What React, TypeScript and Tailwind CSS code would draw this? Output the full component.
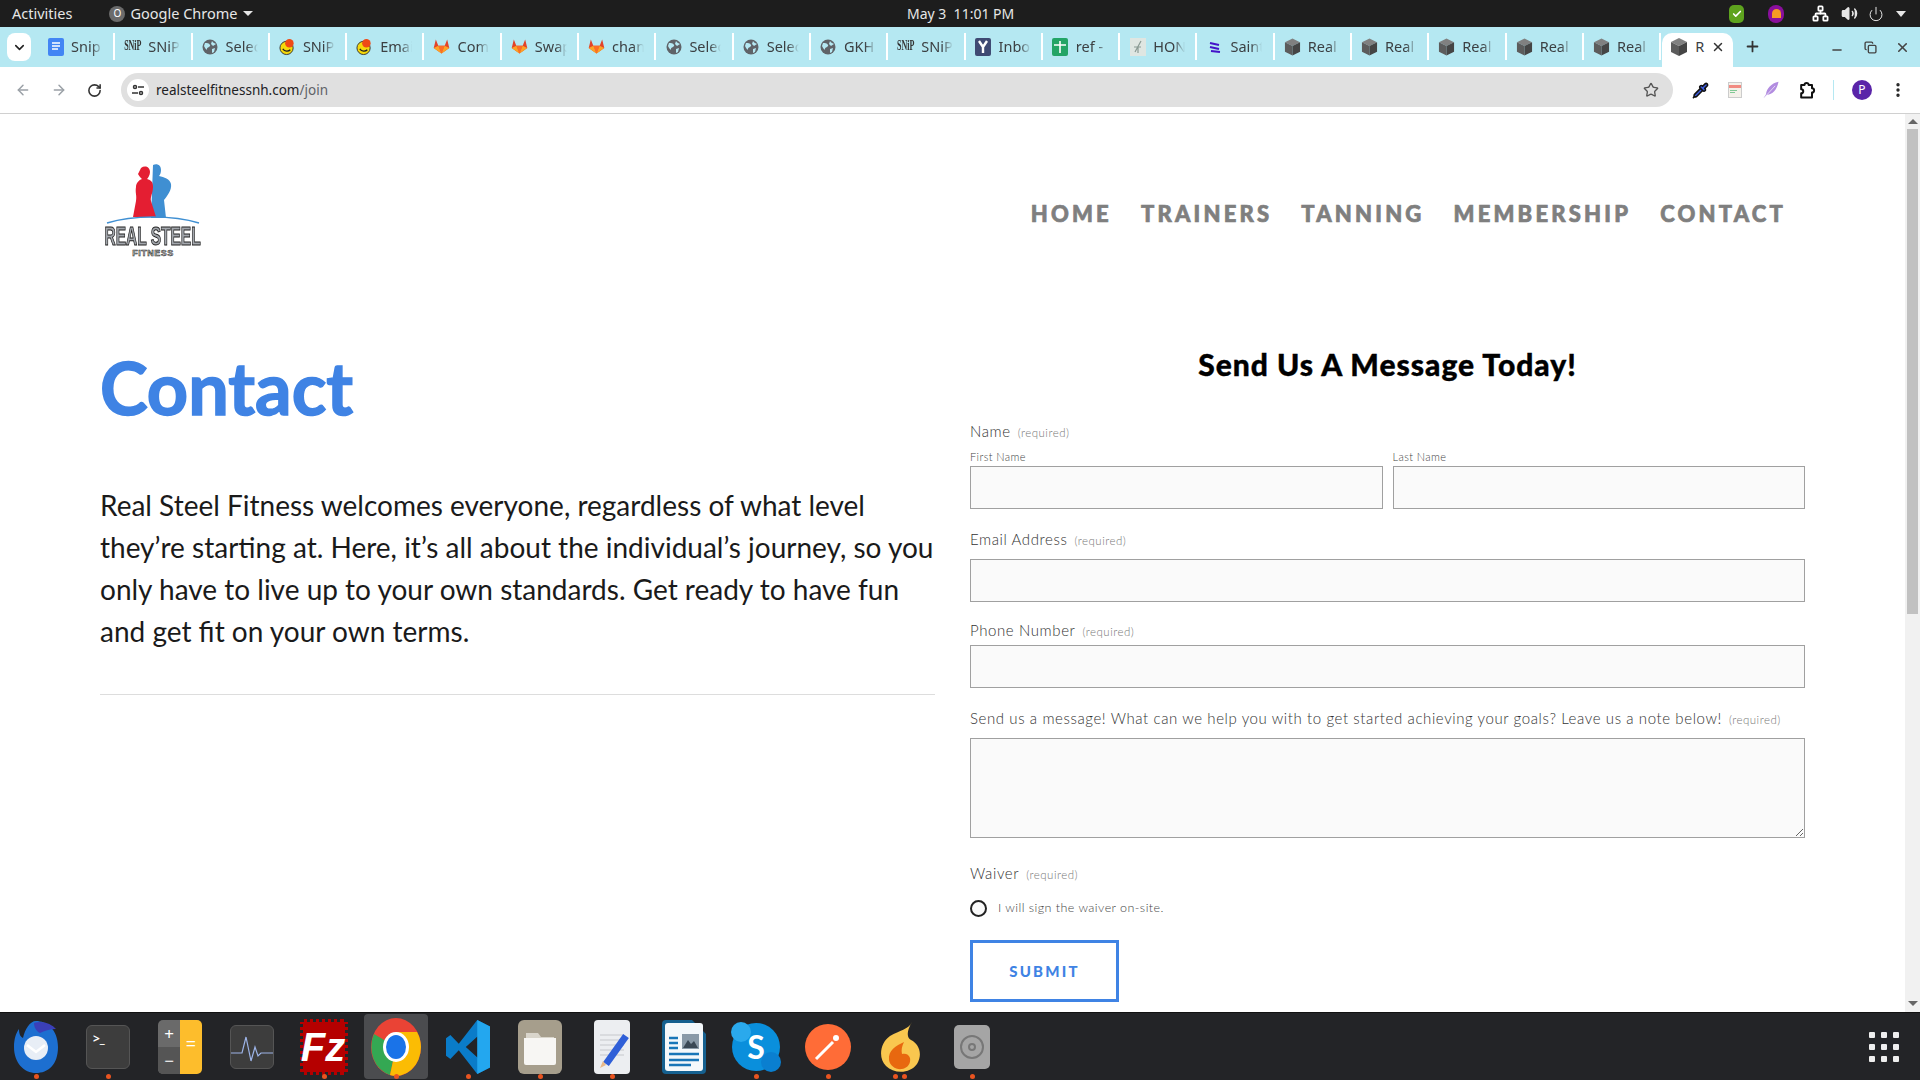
import { ChevronDown, ArrowLeft, ArrowRight, RotateCw, Star, Plus, X, Minus, Copy, EllipsisVertical, Pipette, Volume2, Power, Network, Check } from 'lucide-react';

const uiFont = "[font-family:'Noto_Sans',Roboto,sans-serif]";

type Fav = 'doc' | 'snip' | 'globe' | 'ball' | 'lab' | 'mail' | 'sheet' | 'hon' | 'sain' | 'cube';

const tabs: { icon: Fav; label: string }[] = [
    { icon: 'doc', label: 'Snip' },
    { icon: 'snip', label: 'SNiP' },
    { icon: 'globe', label: 'Selec' },
    { icon: 'ball', label: 'SNiP' },
    { icon: 'ball', label: 'Emai' },
    { icon: 'lab', label: 'Com' },
    { icon: 'lab', label: 'Swap' },
    { icon: 'lab', label: 'chan' },
    { icon: 'globe', label: 'Selec' },
    { icon: 'globe', label: 'Selec' },
    { icon: 'globe', label: 'GKH' },
    { icon: 'snip', label: 'SNiP' },
    { icon: 'mail', label: 'Inbo' },
    { icon: 'sheet', label: 'ref -' },
    { icon: 'hon', label: 'HON' },
    { icon: 'sain', label: 'Saint' },
    { icon: 'cube', label: 'Real' },
    { icon: 'cube', label: 'Real' },
    { icon: 'cube', label: 'Real' },
    { icon: 'cube', label: 'Real' },
    { icon: 'cube', label: 'Real' },
];

const navItems = ['HOME', 'TRAINERS', 'TANNING', 'MEMBERSHIP', 'CONTACT'];

const Cube = () => (
    <svg width="18" height="18" viewBox="0 0 18 18">
        <path d="M9 0 17 4 9 8 1 4z" fill="#808080" />
        <path d="M1 4 9 8v10L1 14z" fill="#5c5c5c" />
        <path d="M17 4 9 8v10l8-4z" fill="#454545" />
    </svg>
);

const Favicon = ({ kind }: { kind: Fav }) => {
    if (kind === 'doc')
        return (
            <svg width="16" height="18" viewBox="0 0 16 18">
                <rect width="16" height="18" rx="2" fill="#4285f4" />
                <path d="M4 5h8M4 8h8M4 11h6" stroke="#fff" strokeWidth="1.6" />
            </svg>
        );
    if (kind === 'snip')
        return (
            <span className="flex h-[18px] w-[16px] scale-y-[1.7] items-center justify-center text-[8px] leading-none font-bold text-[#333] [font-family:'Liberation_Serif',serif]">
                SNiP
            </span>
        );
    if (kind === 'globe')
        return (
            <svg width="16" height="16" viewBox="0 0 16 16">
                <circle cx="8" cy="8" r="7.5" fill="#5f6368" />
                <path d="M3 4c2 0 4 0 5 2S5 8 5 10 3 9 2 7zM10 2c1 2 3 2 4 3l-3 2-2-2zM10 10l3-1-1 4-2 1z" fill="#b5e8f2" />
            </svg>
        );
    if (kind === 'ball')
        return (
            <svg width="18" height="18" viewBox="0 0 18 18">
                <circle cx="8" cy="10" r="7" fill="#f5d90a" stroke="#333" strokeWidth="1" />
                <path d="M4 11c2 3 6 3 8 1" stroke="#222" strokeWidth="1.4" fill="none" />
                <circle cx="11" cy="5" r="4.5" fill="#ef4a16" />
            </svg>
        );
    if (kind === 'lab')
        return (
            <svg width="17" height="17" viewBox="0 0 24 24">
                <path d="M12 22 1 14 4 2l3.5 9h9L20 2l3 12z" fill="#e24329" />
                <path d="M12 22 7.500 11h9z" fill="#fc6d26" />
                <path d="M12 22 1 14l6.500-3zM12 22l11-8-6.500-3z" fill="#fca326" />
            </svg>
        );
    if (kind === 'mail')
        return (
            <svg width="16" height="18" viewBox="0 0 16 18">
                <rect width="16" height="18" rx="2" fill="#3f4a73" />
                <path d="M4 3l4 6 4-6M8 9v6" stroke="#fff" strokeWidth="2.4" fill="none" />
            </svg>
        );
    if (kind === 'sheet')
        return (
            <svg width="16" height="18" viewBox="0 0 16 18">
                <rect width="16" height="18" rx="2" fill="#23a566" />
                <path d="M2 7h12M8 3v12" stroke="#fff" strokeWidth="1.6" />
            </svg>
        );
    if (kind === 'hon')
        return (
            <svg width="16" height="18" viewBox="0 0 16 18">
                <rect width="16" height="18" fill="#dfe6e2" />
                <path d="M5 14 11 3M4 9h7M8 8v7" stroke="#8a9a94" strokeWidth="1.2" fill="none" />
            </svg>
        );
    if (kind === 'sain')
        return (
            <svg width="14" height="14" viewBox="0 0 14 14">
                <path d="M2 3l9 2M2 7l9 2M3 11l9 1" stroke="#4413c9" strokeWidth="2.2" />
            </svg>
        );
    return <Cube />;
};

const Tab = ({ icon, label }: { icon: Fav; label: string }) => (
    <div className="flex h-[27px] w-[77.3px] shrink-0 items-center gap-[7px] overflow-hidden border-r-2 border-white pl-[9px]">
        <span className="flex w-[17px] shrink-0 justify-center">
            <Favicon kind={icon} />
        </span>
        <span className={`w-[32px] overflow-hidden text-[14.5px] whitespace-nowrap text-[#3c4043] [mask-image:linear-gradient(to_right,#000_65%,transparent)] ${uiFont}`}>
            {label}
        </span>
    </div>
);

const TopBar = () => (
    <div className={`relative flex h-[27px] shrink-0 items-center justify-between bg-[#1d1d1d] pr-[14px] pl-[12px] text-[14.5px] text-[#e6e6e6] ${uiFont}`}>
        <div className="flex items-center">
            <span>Activities</span>
            <span className="ml-[37px] flex h-[16px] w-[16px] items-center justify-center rounded-full bg-[#6b6b6b] text-[10px] text-white">O</span>
            <span className="ml-[5px]">Google Chrome</span>
            <span className="ml-[6px] h-0 w-0 border-x-[5px] border-t-[5px] border-x-transparent border-t-[#e6e6e6]" />
        </div>
        <span className="absolute left-[907px] text-[14px]">May 3&nbsp; 11:01 PM</span>
        <div className="flex items-center">
            <span className="flex h-[18px] w-[15px] items-center justify-center rounded-[5px] bg-[#5ea31e]">
                <Check size={10} color="#fff" strokeWidth={4} />
            </span>
            <span className="ml-[24px] flex h-[18px] w-[16px] items-center justify-center rounded-full bg-[#8a0f9c]">
                <span className="h-[9px] w-[9px] rounded-t-full bg-[#f59b23]" />
            </span>
            <Network size={17} className="ml-[28px]" color="#fff" strokeWidth={2.5} />
            <Volume2 size={17} className="ml-[12px]" color="#e6e6e6" fill="#e6e6e6" />
            <Power size={16} className="ml-[10px]" color="#e6e6e6" strokeWidth={1.5} />
            <span className="ml-[12px] h-0 w-0 border-x-[5px] border-t-[6px] border-x-transparent border-t-[#e6e6e6]" />
        </div>
    </div>
);

const TabStrip = () => (
    <div className="flex h-[40px] shrink-0 items-end bg-[#b5e8f2]">
        <div className="mb-[6px] ml-[7px] flex h-[28px] w-[24px] items-center justify-center rounded-[8px] bg-white">
            <ChevronDown size={15} color="#222" strokeWidth={2.5} />
        </div>
        <div className="mb-[7px] ml-[7px] flex">
            {tabs.map((t, i) => (
                <Tab key={i} icon={t.icon} label={t.label} />
            ))}
        </div>
        <div className="ml-[1px] flex h-[34px] w-[71px] shrink-0 items-center rounded-t-[10px] bg-white pb-[6px] pl-[8px]">
            <Cube />
            <span className={`ml-[7px] w-[10px] overflow-hidden text-[14.5px] text-[#3c4043] ${uiFont}`}>R</span>
            <X size={14} className="ml-[6px]" color="#333" strokeWidth={2.5} />
        </div>
        <Plus size={17} className="mb-[12px] ml-[11px]" color="#333" strokeWidth={2.5} />
        <Minus size={14} className="mb-[10px] ml-[69px]" color="#444" strokeWidth={2.5} />
        <Copy size={13} className="mb-[13px] ml-[20px]" color="#444" strokeWidth={2.5} />
        <X size={15} className="mb-[12px] ml-[18px]" color="#444" strokeWidth={2.5} />
    </div>
);

const Toolbar = () => (
    <div className="flex h-[47px] shrink-0 items-center border-b border-[#d0d0d0] bg-white pl-[15px]">
        <ArrowLeft size={16} color="#9aa0a6" strokeWidth={2.2} />
        <ArrowRight size={16} className="ml-[20px]" color="#9aa0a6" strokeWidth={2.2} />
        <RotateCw size={15} className="ml-[20px]" color="#333" strokeWidth={2.5} />
        <div className="ml-[19px] flex h-[34px] w-[1552px] items-center rounded-full bg-[#e0e0e0] pl-[6px]">
            <span className="flex h-[22px] w-[22px] items-center justify-center rounded-full bg-white">
                <svg width="14" height="14" viewBox="0 0 14 14" fill="none" stroke="#333" strokeWidth="1.5">
                    <circle cx="4" cy="4" r="1.5" />
                    <circle cx="10" cy="10" r="1.5" />
                    <path d="M7 4h6M1 10h6" />
                </svg>
            </span>
            <span className={`ml-[7px] text-[13.5px] text-[#202124] ${uiFont}`}>
                realsteelfitnessnh.com<span className="text-[#5f6368]">/join</span>
            </span>
            <Star size={16} className="mr-[14px] ml-auto" color="#555" strokeWidth={2} />
        </div>
        <Pipette size={17} className="ml-[19px]" color="#111" fill="#3b5bdb" strokeWidth={2.2} />
        <span className="ml-[19px] h-[16px] w-[14px] border border-[#ccc] bg-[#f4f1ea] pt-[2px]">
            <span className="block h-[3px] bg-[#f28b82]" />
            <span className="mt-[2px] ml-[1px] block h-[1px] w-[7px] bg-[#81c995]" />
            <span className="mt-[1px] ml-[1px] block h-[1px] w-[5px] bg-[#81c995]" />
        </span>
        <svg width="20" height="20" viewBox="0 0 24 24" className="ml-[19px]">
            <path d="M21 2C12 4 7 10 6 17l-3 5 4-4c7-1 12-6 14-16z" fill="#b28ce0" />
            <path d="M17 7 5 20" stroke="#fff" strokeWidth="0.8" />
        </svg>
        <svg width="20" height="20" viewBox="0 0 22 24" className="ml-[16px]" fill="none" stroke="#111" strokeWidth="2.4" strokeLinejoin="round">
            <path d="M4 6h4a2.5 2.5 0 0 1 5 0h4v4a2.5 2.5 0 0 1 0 5v6H4v-5a2.5 2.5 0 0 0 0-5z" />
        </svg>
        <span className="ml-[16px] h-[20px] w-px bg-[#b5e8f2]" />
        <span className={`ml-[18px] flex h-[20px] w-[20px] items-center justify-center rounded-full bg-[#5a24a8] text-[12px] text-white ${uiFont}`}>P</span>
        <EllipsisVertical size={18} className="ml-[17px]" color="#222" strokeWidth={2.5} />
    </div>
);

const Logo = () => (
    <div className="flex h-[96px] w-[100px] flex-col items-center">
        <svg width="100" height="62" viewBox="0 0 100 62" className="shrink-0">
            <path d="M50 2c4-2 8 0 8 5 0 3-1 5-2 6 5 1 11 3 12 8 1 6-4 12-7 16l2 18H48z" fill="#3f8fd2" />
            <path d="M38 5c4-3 9-1 9 4 0 3-2 6-3 7 4 1 6 3 6 8 0 6-3 10-2 14l5 16H30l3-16c1-6-1-8 0-14 0-4 3-7 6-8-2-2-3-3-4-5z" fill="#e41e32" />
            <path d="M4 60C30 52 70 52 96 60" stroke="#3f8fd2" strokeWidth="1.5" fill="none" />
        </svg>
        <span className="-mt-[1px] scale-x-[0.62] text-[25px] leading-[24px] font-bold whitespace-nowrap text-[#a3a7ad] [font-family:'Liberation_Sans',sans-serif] [-webkit-text-stroke:1px_#1c1c1c]">
            REAL STEEL
        </span>
        <span className="text-[9px] leading-[10px] font-bold tracking-[0.5px] text-[#ccc] [font-family:'Liberation_Sans',sans-serif] [-webkit-text-stroke:0.5px_#1c1c1c]">
            FITNESS
        </span>
    </div>
);

const Required = () => <span className="ml-[7px] text-[11.5px] font-light tracking-[0.5px] text-[#777]">(required)</span>;

const FieldLabel = ({ children }: { children: React.ReactNode }) => (
    <div className="text-[15px] leading-[20px] font-light tracking-[0.6px] text-[#333]">
        {children}
        <Required />
    </div>
);

const inputClass = 'block h-[43px] w-full border border-[#a0a0a0] bg-[#fafafa]';

const Form = () => (
    <div className="w-[835px] shrink-0 text-[#444]">
        <h2 className="-mt-[2px] text-center text-[30px] leading-[40px] font-black tracking-[1px] text-black [-webkit-text-stroke:0.4px_#000]">Send Us A Message Today!</h2>
        <div className="mt-[37px]">
            <FieldLabel>Name</FieldLabel>
        </div>
        <div className="mt-[7px] grid grid-cols-2 gap-[10px]">
            <div>
                <div className="mb-[2px] text-[11px] leading-[14px] font-light tracking-[0.4px] text-[#444]">First Name</div>
                <input className={inputClass} aria-label="First Name" />
            </div>
            <div>
                <div className="mb-[2px] text-[11px] leading-[14px] font-light tracking-[0.4px] text-[#444]">Last Name</div>
                <input className={inputClass} aria-label="Last Name" />
            </div>
        </div>
        <div className="mt-[20px]">
            <FieldLabel>Email Address</FieldLabel>
        </div>
        <input className={`${inputClass} mt-[8px]`} aria-label="Email Address" />
        <div className="mt-[18px]">
            <FieldLabel>Phone Number</FieldLabel>
        </div>
        <input className={`${inputClass} mt-[3px]`} aria-label="Phone Number" />
        <div className="mt-[20px]">
            <FieldLabel>Send us a message! What can we help you with to get started achieving your goals? Leave us a note below!</FieldLabel>
        </div>
        <textarea className="mt-[8px] block h-[100px] w-full border border-[#a0a0a0] bg-[#fafafa]" aria-label="Message" />
        <div className="mt-[25px]">
            <FieldLabel>Waiver</FieldLabel>
        </div>
        <div className="mt-[14px] flex items-center">
            <span className="h-[17px] w-[17px] rounded-full border-2 border-[#222] bg-[#fafafa]" />
            <span className="ml-[11px] text-[12.5px] font-light tracking-[0.45px] text-[#444]">I will sign the waiver on-site.</span>
        </div>
        <button className="mt-[22px] flex h-[62px] w-[149px] items-center justify-center border-[3px] border-[#3f83e4] text-[15px] font-black tracking-[2.2px] text-[#3f83e4]">
            SUBMIT
        </button>
    </div>
);

const Page = () => (
    <div className="flex min-h-0 flex-1 bg-white">
        <div className="min-w-0 flex-1 overflow-hidden pr-[100px] pl-[100px] [font-family:Lato,'Noto_Sans',sans-serif]">
            <header className="flex h-[150px] items-start justify-between pl-[3px]">
                <div className="mt-[49px]">
                    <Logo />
                </div>
                <nav className="mt-[83px] mr-[19px] flex gap-[29px]">
                    {navItems.map((item) => (
                        <span key={item} className="text-[22px] font-black tracking-[3.2px] text-[#7f7f7f] [-webkit-text-stroke:0.7px_#7f7f7f]">
                            {item}
                        </span>
                    ))}
                </nav>
            </header>
            <main className="mt-[82px] flex gap-[35px]">
                <div className="w-[835px] shrink-0">
                    <h1 className="-mt-[1px] text-[72px] leading-[84px] font-bold text-[#3f83e4] [-webkit-text-stroke:1.5px_#3f83e4]">Contact</h1>
                    <p className="mt-[55px] w-[838px] text-[28px] leading-[42px] text-[#1a1a1a]">
                        Real Steel Fitness welcomes everyone, regardless of what level they’re starting at. Here, it’s all about the individual’s journey, so you only have to live up to your own standards. Get ready to have fun and get fit on your own terms.
                    </p>
                    <div className="mt-[42px] h-px bg-[#ddd]" />
                </div>
                <Form />
            </main>
        </div>
        <div className="flex w-[15px] shrink-0 flex-col items-center bg-[#f1f1f1]">
            <span className="mt-[5px] h-0 w-0 border-x-[5px] border-b-[5px] border-x-transparent border-b-[#666]" />
            <div className="mt-[5px] h-[485px] w-[11px] bg-[#c1c1c1]" />
            <span className="mt-auto mb-[6px] h-0 w-0 border-x-[5px] border-t-[5px] border-x-transparent border-t-[#666]" />
        </div>
    </div>
);

const DockIcon = ({ children, dots = 1, active }: { children: React.ReactNode; dots?: number; active?: boolean }) => (
    <div className={`relative flex h-[65px] w-[64px] shrink-0 items-center justify-center rounded-[4px] ${active ? 'bg-[#4b4c4f]' : ''}`}>
        {children}
        {dots > 0 && (
            <div className="absolute bottom-0 flex gap-[4px]">
                {Array.from({ length: dots }).map((_, i) => (
                    <span key={i} className="h-[5px] w-[5px] rounded-full bg-[#e95420]" />
                ))}
            </div>
        )}
    </div>
);

const Dock = () => (
    <div className="flex h-[68px] shrink-0 items-center border-t border-[#111] bg-[#232427] pr-[21px] pl-[4px]">
        <div className="flex gap-[8px]">
            <DockIcon>
                <svg width="48" height="56" viewBox="0 0 48 56">
                    <path d="M24 2c10 0 22 8 22 26S36 54 24 54 2 44 2 28c0-8 2-14 5-18 0 6 2 8 4 9C13 10 18 2 24 2z" fill="#1d6fd0" />
                    <path d="M22 4c8-3 18 1 22 6-6 0-12 2-16 4-4-2-6-6-6-10z" fill="#3b3fb8" />
                    <circle cx="24" cy="29" r="12" fill="#e8eef6" />
                    <path d="M15 26l9 7 9-7" stroke="#fff" strokeWidth="2.5" fill="none" />
                </svg>
            </DockIcon>
            <DockIcon>
                <div className={`h-[44px] w-[44px] rounded-[6px] border border-[#555] bg-[#3d3d3d] pt-[7px] pl-[6px] text-[12px] leading-none font-bold text-white ${uiFont}`}>
                    &gt;_
                </div>
            </DockIcon>
            <DockIcon dots={0}>
                <div className={`flex h-[54px] w-[44px] overflow-hidden rounded-[5px] ${uiFont}`}>
                    <div className="flex w-[22px] flex-col bg-[#6a6a6a] text-center text-[17px] leading-[27px] text-white">
                        <span>+</span>
                        <span className="bg-[#555]">−</span>
                    </div>
                    <div className="w-[22px] bg-[#fdbd2c] pt-[12px] text-center text-[18px] leading-[22px] text-white">=</div>
                </div>
            </DockIcon>
            <DockIcon dots={0}>
                <div className="h-[44px] w-[44px] rounded-[6px] border border-[#555] bg-[#3d3d3d]">
                    <svg width="42" height="42" viewBox="0 0 42 42" fill="none" stroke="#9db4e8" strokeWidth="1.2">
                        <path d="M0 27h11l4-16 5 24 4-14 3 9 3-3h12" />
                    </svg>
                </div>
            </DockIcon>
            <DockIcon>
                <div className="flex h-[56px] w-[48px] items-center justify-center border-[3px] border-dotted border-[#232427] bg-[#b50000] pr-[2px] text-[40px] leading-none font-bold text-white italic [font-family:'Liberation_Sans',sans-serif]">
                    Fz
                </div>
            </DockIcon>
            <DockIcon active>
                <svg width="50" height="58" viewBox="0 0 50 58">
                    <ellipse cx="25" cy="29" rx="25" ry="29" fill="#ea4335" />
                    <path d="M25 29 3 16A25 29 0 0 0 19 57z" fill="#34a853" />
                    <path d="M25 29 19 57A25 29 0 0 0 50 29 25 29 0 0 0 46 14H25z" fill="#fbbc04" />
                    <ellipse cx="25" cy="29" rx="13" ry="15" fill="#fff" />
                    <ellipse cx="25" cy="29" rx="10" ry="12" fill="#1a73e8" />
                </svg>
            </DockIcon>
            <DockIcon>
                <svg width="44" height="54" viewBox="0 0 100 100" preserveAspectRatio="none">
                    <path d="M71 0 29 44 10 28 0 34v32l10 6 19-16 42 44 29-12V12zM72 30v40L45 50z" fill="#0a7cc9" />
                    <path d="M71 0l29 12v76l-29 12z" fill="#23a7ef" />
                </svg>
            </DockIcon>
            <DockIcon>
                <div className="flex h-[54px] w-[44px] items-center justify-center rounded-[6px] bg-[#a69e8c]">
                    <svg width="32" height="36" viewBox="0 0 32 36">
                        <path d="M2 4h12l3 4h13v4H2z" fill="#d9d5cb" />
                        <path d="M0 9h32v25a2 2 0 0 1-2 2H2a2 2 0 0 1-2-2z" fill="#f7f6f3" />
                    </svg>
                </div>
            </DockIcon>
            <DockIcon>
                <div className="relative h-[54px] w-[36px] rounded-[4px] bg-[#eceef1]">
                    <svg width="36" height="54" viewBox="0 0 36 54" fill="none">
                        <path d="M6 15h24M6 20h24M6 25h24M6 30h24M6 35h24" stroke="#c6c8cc" strokeWidth="1" />
                        <path d="M32 16 12 44" stroke="#2f5fd8" strokeWidth="7" />
                        <path d="M9 41l-3 7 6-3z" fill="#e8b98a" />
                    </svg>
                </div>
            </DockIcon>
            <DockIcon dots={0}>
                <svg width="44" height="54" viewBox="0 0 44 54">
                    <path d="M4 0h26l14 14v36a4 4 0 0 1-4 4H4a4 4 0 0 1-4-4V4a4 4 0 0 1 4-4z" fill="#15608f" />
                    <rect x="3" y="3" width="38" height="48" rx="3" fill="#f4f8fb" />
                    <path d="M7 18h9M7 23h9M7 28h9M7 34h30M7 40h30M7 45h22" stroke="#1976b8" strokeWidth="2.5" />
                    <rect x="20" y="14" width="17" height="15" fill="#8a9aa8" />
                    <path d="M21 28l5-8 3 4 3-3 4 7z" fill="#3a4855" />
                </svg>
            </DockIcon>
            <DockIcon>
                <div className="relative flex h-[48px] w-[48px] items-center justify-center rounded-full bg-[#0a8fdc] text-[32px] font-bold text-white [font-family:Lato,sans-serif]">
                    <span className="absolute -top-[1px] -left-[1px] h-[20px] w-[20px] rounded-full bg-[#2aa9ec]" />
                    <span className="absolute -right-[1px] -bottom-[1px] h-[20px] w-[20px] rounded-full bg-[#0a7fd0]" />
                    <span className="relative">S</span>
                </div>
            </DockIcon>
            <DockIcon>
                <div className="flex h-[46px] w-[46px] items-center justify-center rounded-full bg-[#ff6c37]">
                    <svg width="30" height="30" viewBox="0 0 30 30" fill="none" stroke="#fff" strokeWidth="3">
                        <circle cx="23" cy="6" r="3" fill="#fff" stroke="none" />
                        <path d="M20 10 9 21 3 27" />
                    </svg>
                </div>
            </DockIcon>
            <DockIcon dots={2}>
                <svg width="40" height="50" viewBox="0 0 40 50">
                    <path d="M32 0C28 8 20 8 10 14 0 21-2 36 6 44c8 8 24 8 31-2 6-10 2-20-6-24-4-2-5-8 1-18z" fill="#f9c74f" />
                    <path d="M24 20c-8 4-16 8-15 18 1 6 7 10 13 9 6-1 9-6 8-11-1-4-5-5-8-4-1-4 0-8 2-12z" fill="#e8680f" />
                </svg>
            </DockIcon>
            <DockIcon>
                <div className="flex h-[44px] w-[36px] items-center justify-center rounded-[5px] bg-[#a5a5a5]">
                    <div className="flex h-[24px] w-[24px] items-center justify-center rounded-full border-2 border-[#777]">
                        <div className="h-[8px] w-[8px] rounded-full border-2 border-[#777]" />
                    </div>
                </div>
            </DockIcon>
        </div>
        <div className="ml-auto grid grid-cols-3 gap-[6px]">
            {Array.from({ length: 9 }).map((_, i) => (
                <span key={i} className="h-[6px] w-[6px] rounded-[1px] bg-[#eee]" />
            ))}
        </div>
    </div>
);

const App = () => {
    return (
        <div className="flex h-screen w-full flex-col overflow-hidden">
            <TopBar />
            <TabStrip />
            <Toolbar />
            <Page />
            <Dock />
        </div>
    );
};

export default App;
